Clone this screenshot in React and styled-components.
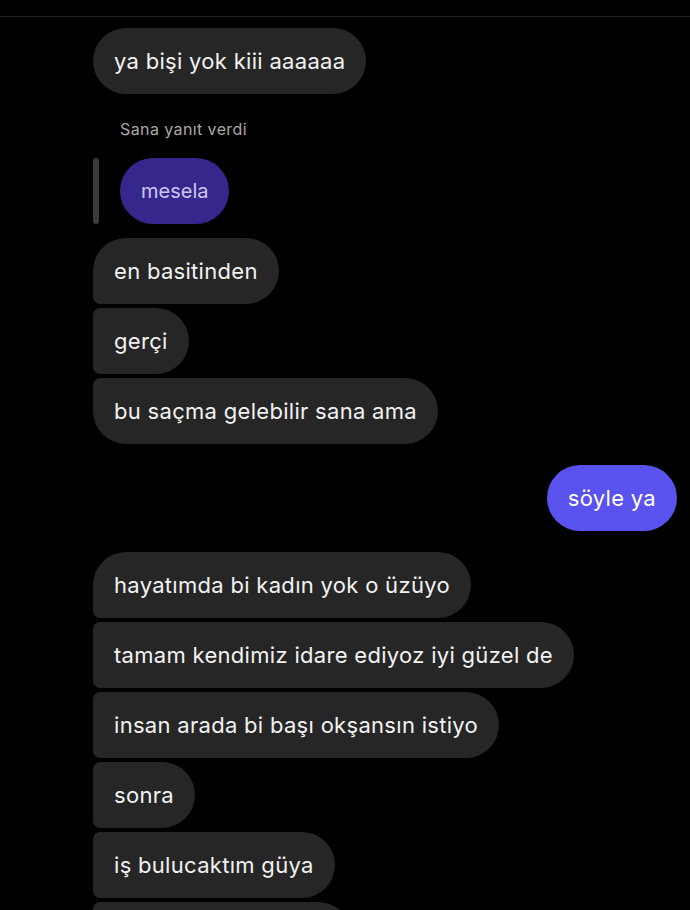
import React from 'react'
import styled, { createGlobalStyle } from 'styled-components'

const Global = createGlobalStyle`
  html, body {
    margin: 0;
    padding: 0;
    background: #000;
  }
  body {
    font-family: Inter, 'Noto Sans', sans-serif;
    -webkit-font-smoothing: antialiased;
  }
`

const Screen = styled.div`
  width: 690px;
  height: 910px;
  overflow: hidden;
  background: #000;
  color: #f5f5f5;
`

const TopRule = styled.div`
  height: 16px;
  border-bottom: 1px solid #262626;
`

const Thread = styled.div`
  display: flex;
  flex-direction: column;
  padding: 11px 13px 0 93px;
`

const Group = styled.div`
  display: flex;
  flex-direction: column;
  align-items: ${p => (p.$mine ? 'flex-end' : 'flex-start')};
  gap: 4px;
  margin-top: ${p => p.$top || 0}px;
`

const Bubble = styled.div`
  height: 66px;
  box-sizing: border-box;
  display: flex;
  align-items: center;
  padding: 0 21px 0 21px;
  font-size: 22px;
  letter-spacing: 0.3px;
  white-space: nowrap;
  background: ${p => (p.$mine ? '#5a52ee' : '#262626')};
  color: ${p => (p.$mine ? '#fff' : '#f2f2f2')};
  border-radius: 33px;
  ${p => !p.$mine && !p.$first && 'border-top-left-radius: 7px;'}
  ${p => !p.$mine && !p.$last && 'border-bottom-left-radius: 7px;'}
`

const ReplyLabel = styled.div`
  font-size: 16px;
  color: #a8a8a8;
  padding-left: 27px;
  margin: 25px 0 19px;
  letter-spacing: 0.4px;
`

const ReplyRow = styled.div`
  display: flex;
  align-items: stretch;
  gap: 21px;
  margin-bottom: 10px;
`

const ReplyBar = styled.div`
  width: 6px;
  border-radius: 3px;
  background: #3a3a3a;
`

const QuotedBubble = styled.div`
  height: 66px;
  box-sizing: border-box;
  display: flex;
  align-items: center;
  padding: 0 21px;
  border-radius: 33px;
  background: #35278b;
  color: #cdc6f2;
  font-size: 20px;
`

const theirs1 = ['en basitinden', 'gerçi', 'bu saçma gelebilir sana ama']
const theirs2 = [
  'hayatımda bi kadın yok o üzüyo',
  'tamam kendimiz idare ediyoz iyi güzel de',
  'insan arada bi başı okşansın istiyo',
  'sonra',
  'iş bulucaktım güya',
  'ondan da vazgeçtim'
]

function Their({ items, top }) {
  return (
    <Group $top={top}>
      {items.map((t, i) => (
        <Bubble key={i} $first={i === 0} $last={i === items.length - 1}>
          {t}
        </Bubble>
      ))}
    </Group>
  )
}

export default function App() {
  return (
    <Screen>
      <Global />
      <TopRule />
      <Thread>
        <Group>
          <Bubble $first $last>ya bişi yok kiii aaaaaa</Bubble>
        </Group>
        <ReplyLabel>Sana yanıt verdi</ReplyLabel>
        <ReplyRow>
          <ReplyBar />
          <QuotedBubble>mesela</QuotedBubble>
        </ReplyRow>
        <Their items={theirs1} top={4} />
        <Group $mine $top={21}>
          <Bubble $mine>söyle ya</Bubble>
        </Group>
        <Their items={theirs2} top={21} />
      </Thread>
    </Screen>
  )
}
